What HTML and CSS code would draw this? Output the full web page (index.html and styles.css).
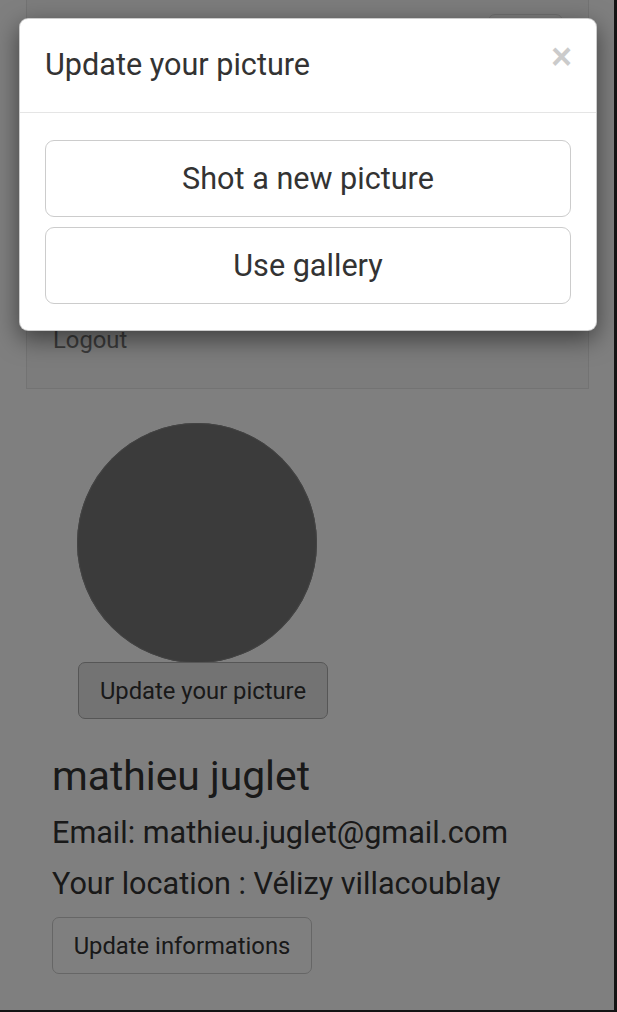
FILE: index.html
```html
<!DOCTYPE html>
<html lang="en">
<head>
<meta charset="utf-8">
<title>Profile</title>
<link rel="stylesheet" href="styles.css">
</head>
<body>
<div class="screen">
  <nav class="navbar">
    <div class="navbar-header">
      <button class="navbar-toggle" type="button" aria-label="Toggle navigation">
        <span class="icon-bar"></span><span class="icon-bar"></span><span class="icon-bar"></span>
      </button>
    </div>
    <div class="navbar-collapse">
      <ul class="nav">
        <li><a href="#">Logout</a></li>
      </ul>
    </div>
  </nav>

  <main class="profile">
    <div class="avatar-block">
      <div class="avatar"></div>
      <button class="btn btn-active" type="button">Update your picture</button>
    </div>
    <h3 class="name">mathieu juglet</h3>
    <h4 class="info">Email: mathieu.juglet@gmail.com</h4>
    <h4 class="info">Your location : Vélizy villacoublay</h4>
    <button class="btn" type="button">Update informations</button>
  </main>

  <div class="backdrop"></div>

  <div class="modal">
    <div class="modal-header">
      <h4 class="modal-title">Update your picture</h4>
      <button class="close" type="button" aria-label="Close">×</button>
    </div>
    <div class="modal-body">
      <button class="btn btn-lg" type="button">Shot a new picture</button>
      <button class="btn btn-lg" type="button">Use gallery</button>
    </div>
  </div>
</div>
</body>
</html>
```
FILE: styles.css
```css
html {
  background: #141414;
}
body {
  margin: 0;
  font-family: Roboto, "Liberation Sans", sans-serif;
  color: #333;
}
.screen {
  position: relative;
  width: 614px;
  height: 1010px;
  background: #fff;
  overflow: hidden;
}

/* navbar */
.navbar {
  margin: 0 25px 34px 26px;
  background: #f8f8f8;
  border: 1px solid #e7e7e7;
  border-top: none;
}
.navbar-header {
  height: 86px;
  display: flex;
  justify-content: flex-end;
  align-items: flex-start;
}
.navbar-toggle {
  margin: 14px 25px 0 0;
  width: 75px;
  height: 58px;
  background: transparent;
  border: 1px solid #ddd;
  border-radius: 7px;
  display: flex;
  flex-direction: column;
  align-items: center;
  justify-content: center;
  gap: 7px;
  padding: 0;
}
.icon-bar {
  display: block;
  width: 37px;
  height: 3px;
  background: #888;
  border-radius: 2px;
}
.navbar-collapse {
  border-top: 1px solid #e7e7e7;
}
.nav {
  list-style: none;
  margin: 0;
  padding: 219px 0 14px 0;
}
.nav a {
  display: block;
  padding: 17px 26px;
  line-height: 34px;
  font-size: 23.8px;
  color: #777;
  text-decoration: none;
}

/* profile */
.profile {
  padding: 0 52px;
}
.avatar-block {
  display: flex;
  flex-direction: column;
  align-items: flex-start;
  padding-left: 25px;
}
.avatar {
  width: 240px;
  height: 240px;
  border-radius: 50%;
  background: #767676;
  box-shadow: inset 0 0 0 1px #878787;
}
.btn {
  font-family: Roboto, "Liberation Sans", sans-serif;
  font-size: 23.8px;
  line-height: 34px;
  padding: 10px 20px;
  color: #333;
  background: #fff;
  border: 1px solid #ccc;
  border-radius: 7px;
  text-align: center;
  cursor: pointer;
}
.avatar-block .btn {
  margin-top: -1px;
  margin-left: 1px;
  width: 250px;
  height: 57px;
  padding: 0;
}
.btn-active {
  background: #e6e6e6;
  border-color: #adadad;
}
.name {
  margin: 35px 0 17px;
  font-size: 40.8px;
  line-height: 1.1;
  font-weight: 400;
}
.info {
  margin: 17px 0;
  font-size: 30.6px;
  line-height: 1.1;
  font-weight: 400;
}
.profile > .btn {
  margin-top: 0;
  width: 260px;
  height: 57px;
  padding: 0;
}

/* modal */
.backdrop {
  position: absolute;
  inset: 0;
  background: rgba(0, 0, 0, 0.5);
}
.modal {
  position: absolute;
  top: 18px;
  left: 19px;
  width: 578px;
  box-sizing: border-box;
  background: #fff;
  border: 1px solid rgba(0, 0, 0, 0.2);
  border-radius: 9px;
  box-shadow: 0 8px 25px rgba(0, 0, 0, 0.5);
}
.modal-header {
  display: flex;
  justify-content: space-between;
  align-items: flex-start;
  padding: 24px 25px 25px 25px;
  border-bottom: 1px solid #e5e5e5;
}
.modal-title {
  margin: 0;
  font-size: 30.6px;
  line-height: 44px;
  font-weight: 400;
  color: #333;
}
.close {
  margin-top: -4px;
  margin-right: -1px;
  padding: 0;
  background: transparent;
  border: 0;
  font-family: "Liberation Sans", Arial, sans-serif;
  font-size: 36px;
  font-weight: 700;
  line-height: 1;
  color: #000;
  opacity: 0.2;
  cursor: pointer;
}
.modal-body {
  display: flex;
  flex-direction: column;
  gap: 10px;
  padding: 27px 25px 26px;
}
.btn-lg {
  display: block;
  width: 100%;
  height: 77px;
  padding: 0;
  font-size: 30.6px;
  line-height: 40px;
  border-radius: 9px;
}
```
